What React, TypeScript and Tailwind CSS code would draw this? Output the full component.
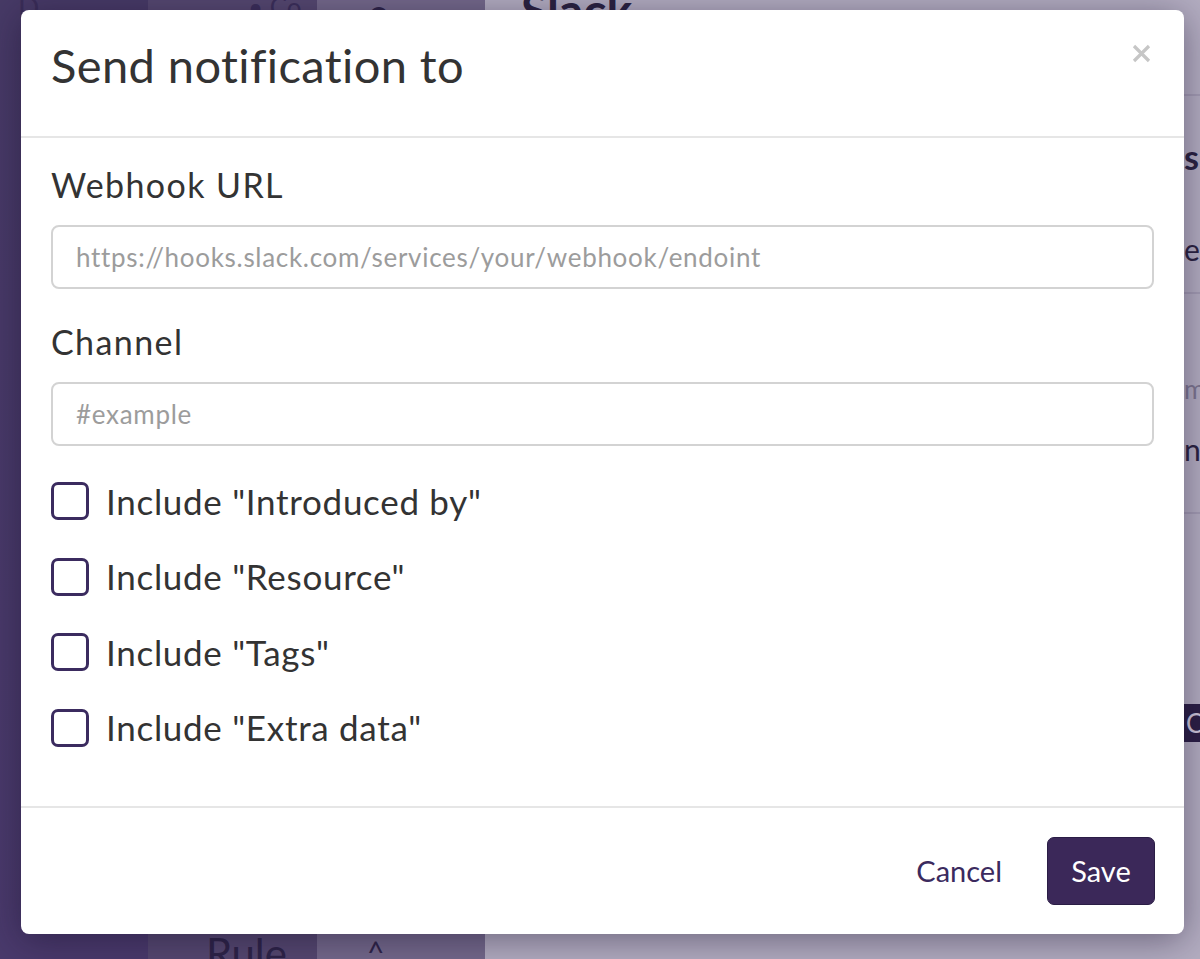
const options = [
  'Include "Introduced by"',
  'Include "Resource"',
  'Include "Tags"',
  'Include "Extra data"',
];

function Field({ label, placeholder, top }: { label: string; placeholder: string; top: string }) {
  return (
    <div className={top}>
      <div className="text-[34px] leading-none tracking-[1.4px] text-[#333333]">{label}</div>
      <input
        readOnly
        placeholder={placeholder}
        className="mt-[23px] h-[64px] w-full rounded-[8px] border-2 border-[#d3d3d3] bg-white pl-[23px] text-[26px] tracking-[0.7px] text-[#333] outline-none placeholder:text-[#9c9c9c]"
      />
    </div>
  );
}

function Checkbox({ label }: { label: string }) {
  return (
    <label className="flex h-[38px] items-center gap-[17px]">
      <span className="h-[38px] w-[38px] shrink-0 rounded-[7px] border-[3px] border-[#3b2b5f] bg-white" />
      <span className="text-[35px] leading-none tracking-[0.7px] text-[#333333]">{label}</span>
    </label>
  );
}

export default function App() {
  return (
    <div className="relative h-[959px] w-full overflow-hidden font-['Lato','Noto_Sans',sans-serif]">
      {/* page behind the dialog */}
      <div className="flex h-full w-full">
        <div className="w-[148px] bg-gradient-to-b from-[#473a66] to-[#4a3a6c]">
          <div className="-mt-[14px] pl-[18px] text-[28px] text-[#3a2d58]">D</div>
        </div>
        <div className="flex w-[169px] flex-col justify-between bg-[#554870]">
          <div className="-mt-[12px] pl-[100px] text-[26px] text-[#3b2f5a]">• Co</div>
          <div className="-mb-[26px] pl-[58px] text-[42px] text-[#2e2448]">Rule</div>
        </div>
        <div className="flex w-[168px] flex-col justify-between bg-[#74698b]">
          <div className="-mt-[14px] pl-[52px] text-[34px] font-bold text-[#2e2448]">o</div>
          <div className="-mb-[16px] pl-[50px] text-[30px] text-[#2e2448]">^</div>
        </div>
        <div className="flex flex-1 bg-[#b3adc1]">
          <div className="flex-1">
            <div className="-mt-[26px] pl-[36px] text-[48px] font-bold text-[#2a2240]">Slack</div>
          </div>
          <div className="-mr-[184px] w-[200px] text-[#2a2240]">
            <div className="h-[96px] border-b-2 border-[#a39cb3]" />
            <div className="pt-[44px] text-[34px] font-bold leading-none">s</div>
            <div className="pt-[60px] text-[30px] leading-none">e</div>
            <div className="h-[30px] border-b-2 border-[#a39cb3]" />
            <div className="pt-[82px] text-[26px] leading-none text-[#7d7690]">m</div>
            <div className="pt-[32px] text-[30px] leading-none">n</div>
            <div className="h-[50px] border-b-2 border-[#a39cb3]" />
            <div className="mt-[190px] flex h-[38px] items-center bg-[#2b1f45] pl-[2px] text-[26px] text-[#cfc8dc]">
              C
            </div>
          </div>
        </div>
      </div>

      {/* dialog */}
      <div className="absolute left-[21px] top-[10px] flex h-[924px] w-[1163px] flex-col rounded-[8px] bg-white shadow-[0_6px_36px_rgba(20,10,40,0.45)]">
        <div className="flex h-[126px] items-start justify-between px-[30px] pt-[32px]">
          <h2 className="text-[47px] leading-none tracking-[0.4px] text-[#333333]">Send notification to</h2>
          <button className="mr-[3px] mt-[2px] text-[#c6c6c6]">
            <svg width="19" height="19" viewBox="0 0 19 19">
              <path d="M2 2 L17 17 M17 2 L2 17" stroke="currentColor" strokeWidth="3.2" />
            </svg>
          </button>
        </div>
        <div className="h-[2px] bg-[#e6e6e6]" />

        <div className="flex-1 px-[30px]">
          <Field label="Webhook URL" placeholder="https://hooks.slack.com/services/your/webhook/endoint" top="pt-[30px]" />
          <Field label="Channel" placeholder="#example" top="pt-[36px]" />
          <div className="mt-[36px] flex flex-col gap-[37.5px]">
            {options.map((o) => (
              <Checkbox key={o} label={o} />
            ))}
          </div>
        </div>

        <div className="h-[2px] bg-[#e6e6e6]" />
        <div className="flex h-[126px] items-center justify-end gap-[45px] px-[29px]">
          <button className="text-[29px] text-[#3b2a5e]">Cancel</button>
          <button className="h-[68px] w-[108px] rounded-[7px] border border-[#2a1d45] bg-[#3b2859] text-[29px] text-white">
            Save
          </button>
        </div>
      </div>
    </div>
  );
}
